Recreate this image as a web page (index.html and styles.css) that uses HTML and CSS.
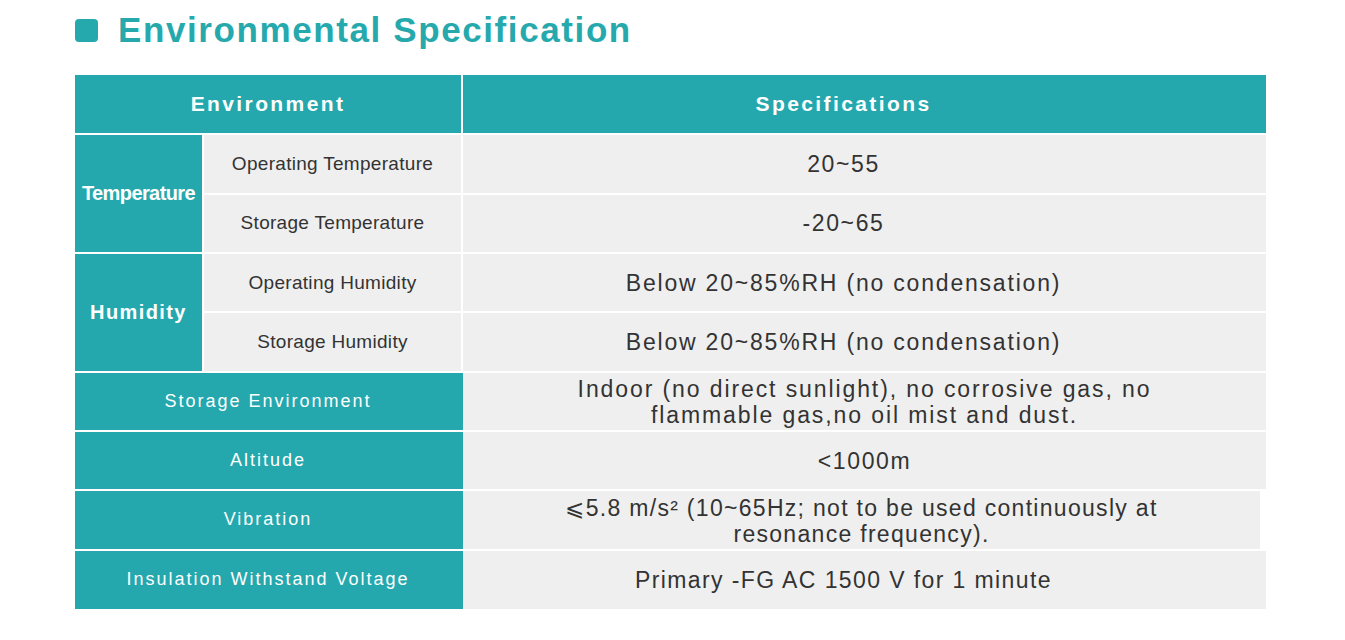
FILE: index.html
```html
<!DOCTYPE html>
<html>
<head>
<meta charset="utf-8">
<link rel="stylesheet" href="styles.css">
</head>
<body>
<div class="page">
  <h1 class="title"><span class="bullet"></span>Environmental Specification</h1>
  <table class="spec">
    <colgroup>
      <col class="c1"><col class="c2"><col class="c3">
    </colgroup>
    <thead>
      <tr><th colspan="2" class="hd hd-left">Environment</th><th class="hd hd-right">Specifications</th></tr>
    </thead>
    <tbody>
      <tr><td rowspan="2" class="grp grp-temp">Temperature</td><td class="sub">Operating Temperature</td><td class="val off">20~55</td></tr>
      <tr><td class="sub">Storage Temperature</td><td class="val off">-20~65</td></tr>
      <tr><td rowspan="2" class="grp grp-hum">Humidity</td><td class="sub">Operating Humidity</td><td class="val off below">Below 20~85%RH (no condensation)</td></tr>
      <tr><td class="sub">Storage Humidity</td><td class="val off below">Below 20~85%RH (no condensation)</td></tr>
      <tr><td colspan="2" class="lbl">Storage Environment</td><td class="val two indoor">Indoor (no direct sunlight), no corrosive gas, no<br>flammable gas,no oil mist and dust.</td></tr>
      <tr><td colspan="2" class="lbl">Altitude</td><td class="val">&lt;1000m</td></tr>
      <tr><td colspan="2" class="lbl">Vibration</td><td class="val two vib">⩽5.8 m/s² (10~65Hz; not to be used continuously at<br>resonance frequency).</td></tr>
      <tr><td colspan="2" class="lbl">Insulation Withstand Voltage</td><td class="val off prim">Primary -FG AC 1500 V for 1 minute</td></tr>
    </tbody>
  </table>
</div>
</body>
</html>
```

FILE: styles.css
```css
html, body {
  margin: 0;
  padding: 0;
  background: #ffffff;
}
.page {
  padding: 10px 0 0 75px;
  font-family: "Liberation Sans", Arial, sans-serif;
}
.title {
  display: flex;
  align-items: center;
  margin: 0;
  height: 40px;
  color: #26a9ad;
  font-size: 35px;
  font-weight: bold;
  letter-spacing: 1.6px;
}
.bullet {
  display: inline-block;
  width: 23px;
  height: 23px;
  border-radius: 4px;
  background: #26a9ad;
  margin-right: 20px;
}
.spec {
  margin-top: 25px;
  width: 1191px;
  border-collapse: collapse;
  table-layout: fixed;
}
.c1 { width: 128px; }
.c2 { width: 259px; }
.spec tr { height: 59.33px; }
.spec th, .spec td {
  border: 2px solid #ffffff;
  text-align: center;
  padding: 0;
}
.spec tr > :first-child { border-left: none; }
.spec tr > :last-child { border-right: none; }
.spec thead th { border-top: none; }
.spec tbody tr:last-child td { border-bottom: none; }
.spec .hd {
  background: #24a8ad;
  color: #ffffff;
  font-size: 21px;
  font-weight: bold;
  letter-spacing: 2.4px;
}
.spec .hd-left { border-right: 1px solid #d8f0f0; }
.spec .hd-right { padding-right: 42px; }
.spec .grp {
  background: #24a8ad;
  color: #ffffff;
  font-weight: bold;
  font-size: 20px;
}
.spec .grp-temp { letter-spacing: -0.6px; }
.spec .grp-hum { letter-spacing: 1.4px; }
.spec .sub {
  background: #efefef;
  color: #333333;
  font-size: 19px;
  letter-spacing: 0.3px;
}
.spec .lbl {
  background: #24a8ad;
  color: #ffffff;
  font-size: 18px;
  letter-spacing: 2px;
  border-right: 2px solid #24a8ad;
}
.spec .val {
  background: #efefef;
  color: #333333;
  font-size: 23px;
  letter-spacing: 1.6px;
  line-height: 26px;
}
.spec .off { padding-right: 42px; }
.spec .two { padding-top: 2px; }
.spec .below { letter-spacing: 1.8px; }
.spec .indoor { letter-spacing: 1.9px; }
.spec .vib {
  letter-spacing: 1.3px;
  box-shadow: inset -6px 0 0 #ffffff;
  padding-right: 6px;
}
.spec .prim { letter-spacing: 1.4px; }
```
